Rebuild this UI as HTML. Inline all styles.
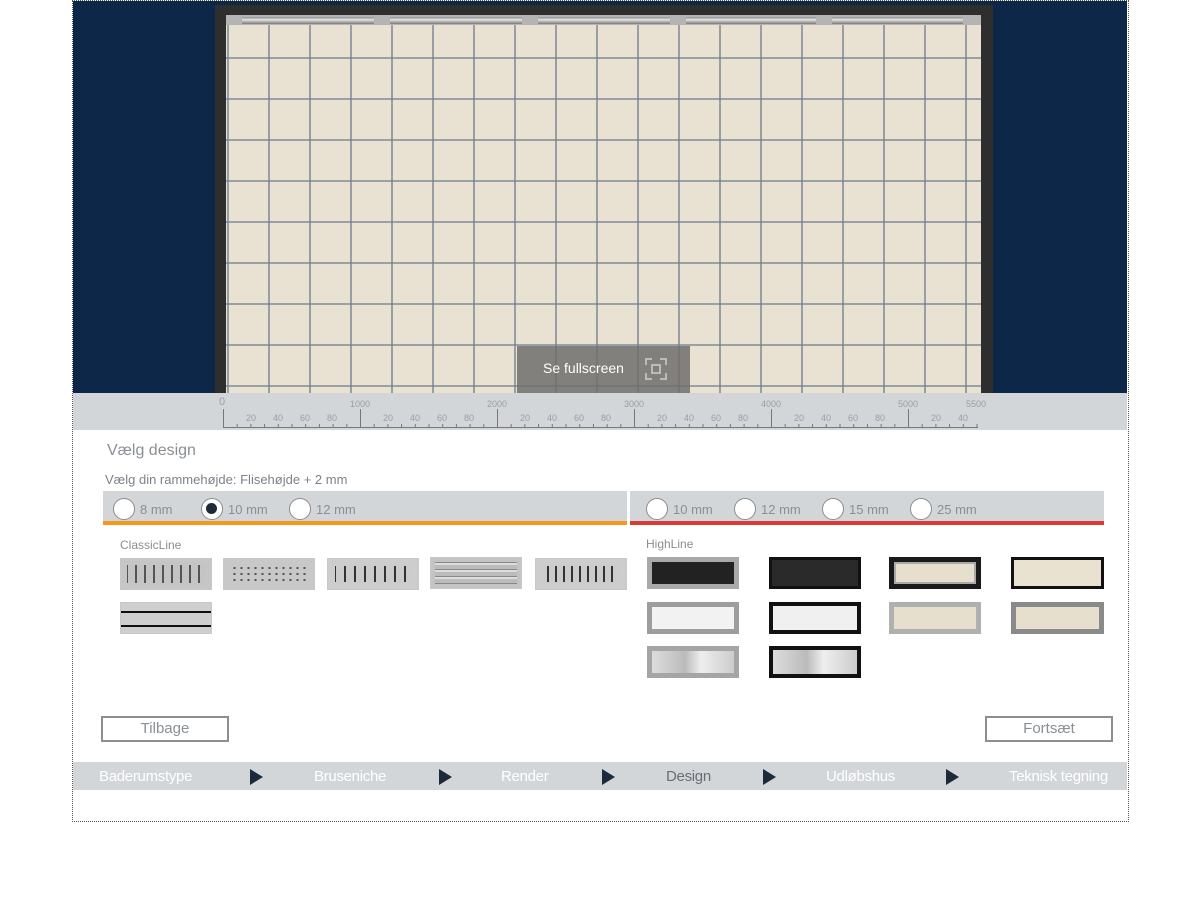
<!DOCTYPE html>
<html><head><meta charset="utf-8"><style>
*{margin:0;padding:0;box-sizing:border-box}
body{width:1200px;height:900px;background:#fff;position:relative;font-family:"Liberation Sans",sans-serif;overflow:hidden}
.a{position:absolute}
.t{color:#8a8f94}
.radio{position:absolute;width:22px;height:22px;border-radius:50%;background:#fff;border:1.5px solid #8c8c8c}
.radio.on::after{content:"";position:absolute;left:4px;top:4px;width:11px;height:11px;border-radius:50%;background:#1c2a3a}
.rl{position:absolute;font-size:13px;color:#8a8f94}
.th{position:absolute;width:92px;height:32px;background:linear-gradient(#d8d8d8,#b9b9b9 50%,#cfcfcf);border:1px solid #c8c8c8}
.nav{position:absolute;top:768px;font-size:15px;color:#fff;letter-spacing:-0.3px}
.arr{position:absolute;top:769px;width:0;height:0;border-top:8px solid transparent;border-bottom:8px solid transparent;border-left:13px solid #1c2a3a}
.btn{position:absolute;height:26px;border:2px solid #8a8f94;font-size:15px;color:#8a8f94;text-align:center;line-height:22px;background:#fff}
</style></head><body>
<div class="a" style="left:72px;top:0;width:1057px;height:822px;border:1px dotted #555"></div>
<div class="a" style="left:73px;top:1px;width:1054px;height:392px;background:#0c2747"></div>
<div class="a" style="left:215px;top:5px;width:778px;height:388px;background:#2e2e2e"></div>
<svg class="a" style="left:226px;top:15px" width="755" height="378">
<defs><pattern id="g" x="1" y="1" width="41" height="41" patternUnits="userSpaceOnUse"><path d="M1 0V41M0 1H41" stroke="#6b7a8c" stroke-width="1.3" fill="none"/></pattern>
<linearGradient id="dr" x1="0" y1="0" x2="0" y2="1"><stop offset="0" stop-color="#8e8e8e"/><stop offset=".4" stop-color="#e2e2e2"/><stop offset="1" stop-color="#777"/></linearGradient></defs>
<rect width="755" height="378" fill="#e9e2d2"/>
<rect width="755" height="378" fill="url(#g)"/>
<rect width="755" height="10" fill="#b4b4b4"/>
<rect x="16" y="2" width="132" height="7" fill="url(#dr)"/><rect x="164" y="2" width="132" height="7" fill="url(#dr)"/><rect x="312" y="2" width="132" height="7" fill="url(#dr)"/><rect x="460" y="2" width="130" height="7" fill="url(#dr)"/><rect x="606" y="2" width="131" height="7" fill="url(#dr)"/>
</svg>
<div class="a" style="left:517px;top:346px;width:173px;height:47px;background:rgba(110,110,110,.85)"></div>
<div class="a" style="left:543px;top:360px;font-size:14px;color:#fff">Se fullscreen</div>
<svg class="a" style="left:645px;top:358px" width="22" height="22"><path d="M1 7V1H7M15 1H21V7M21 15V21H15M7 21H1V15M7 7H15V15H7Z" stroke="#bbb" stroke-width="2" fill="none"/></svg>
<div class="a" style="left:73px;top:393px;width:1054px;height:37px;background:#d3d6d9"></div>
<svg class="a" style="left:200px;top:393px" width="800" height="37" font-family="Liberation Sans" font-size="9" fill="#9a9ea3">
<defs><pattern id="tk" x="23" y="0" width="13.7" height="37" patternUnits="userSpaceOnUse"><path d="M0.5 31V35" stroke="#777"/></pattern></defs>
<rect x="23" y="0" width="755" height="37" fill="url(#tk)"/>
<path d="M23 34.5H778M23.5 16V35M160.5 16V35M297.5 16V35M434.5 16V35M571.5 16V35M708.5 16V35" stroke="#777"/>
<text x="19" y="12" font-size="11">0</text><text x="150" y="14">1000</text><text x="287" y="14">2000</text><text x="424" y="14">3000</text><text x="561" y="14">4000</text><text x="698" y="14">5000</text><text x="766" y="14">5500</text>
<g id="s"><text x="46" y="28">20</text><text x="73" y="28">40</text><text x="100" y="28">60</text><text x="127" y="28">80</text></g>
<use href="#s" x="137"/><use href="#s" x="274"/><use href="#s" x="411"/><use href="#s" x="548"/>
<text x="731" y="28">20</text><text x="758" y="28">40</text>
</svg>
<div class="a t" style="left:107px;top:442px;font-size:16px">Vælg design</div>
<div class="a t" style="left:105px;top:472px;font-size:13px;color:#7d8288">Vælg din rammehøjde: Flisehøjde + 2 mm</div>
<div class="a" style="left:103px;top:491px;width:524px;height:34px;background:#d3d6d9;border-bottom:4px solid #f39a1e"></div>
<div class="a" style="left:630px;top:491px;width:474px;height:34px;background:#d3d6d9;border-bottom:4px solid #d93a3a"></div>
<div class="radio" style="left:113px;top:498px"></div><div class="rl" style="left:140px;top:502px">8 mm</div>
<div class="radio on" style="left:201px;top:498px"></div><div class="rl" style="left:228px;top:502px">10 mm</div>
<div class="radio" style="left:289px;top:498px"></div><div class="rl" style="left:316px;top:502px">12 mm</div>
<div class="radio" style="left:646px;top:498px"></div><div class="rl" style="left:673px;top:502px">10 mm</div>
<div class="radio" style="left:734px;top:498px"></div><div class="rl" style="left:761px;top:502px">12 mm</div>
<div class="radio" style="left:822px;top:498px"></div><div class="rl" style="left:849px;top:502px">15 mm</div>
<div class="radio" style="left:910px;top:498px"></div><div class="rl" style="left:937px;top:502px">25 mm</div>
<div class="a t" style="left:120px;top:538px;font-size:12px">ClassicLine</div>
<div class="a t" style="left:646px;top:537px;font-size:12px">HighLine</div>
<div class="th" style="left:120px;top:558px;background:repeating-linear-gradient(90deg,#c4c4c4 0 5px,#555 5px 7px,#c4c4c4 7px 9px),#ccc;box-shadow:inset 0 0 0 6px #c6c6c6"></div>
<div class="th" style="left:223px;top:558px;background:radial-gradient(#555 1px,transparent 1.5px) 0 0/7px 6px,#c8c8c8;box-shadow:inset 0 0 0 7px #c8c8c8"></div>
<div class="th" style="left:327px;top:558px;background:repeating-linear-gradient(90deg,#ccc 0 6px,#333 6px 8px,#ccc 8px 10px);box-shadow:inset 0 0 0 7px #cdcdcd"></div>
<div class="th" style="left:430px;top:557px;background:repeating-linear-gradient(#bbb 0 4px,#888 4px 5px,#ddd 5px 7px);box-shadow:inset 0 0 0 4px #c4c4c4"></div>
<div class="th" style="left:535px;top:558px;background:repeating-linear-gradient(90deg,#ccc 0 3px,#333 3px 5px,#ccc 5px 8px);box-shadow:inset 0 0 0 7px #cdcdcd"></div>
<div class="th" style="left:120px;top:602px;background:linear-gradient(#cfcfcf 0 8px,#111 8px 10px,#cfcfcf 10px 22px,#111 22px 24px,#cfcfcf 24px)"></div>
<div class="th" style="left:647px;top:557px;background:#222;border:5px solid #a9a9a9"></div>
<div class="th" style="left:769px;top:557px;background:#2a2a2a;border:3px solid #111"></div>
<div class="th" style="left:889px;top:557px;background:#e6dfcd;border:5px solid #1a1a1a;box-shadow:inset 0 0 0 2px #aaa"></div>
<div class="th" style="left:1011px;top:557px;width:93px;background:#e9e2d0;border:3px solid #111"></div>
<div class="th" style="left:647px;top:602px;background:#f2f2f2;border:5px solid #9d9d9d"></div>
<div class="th" style="left:769px;top:602px;background:#f0f0f0;border:4px solid #111"></div>
<div class="th" style="left:889px;top:602px;background:#e6dfcd;border:5px solid #b0b0b0"></div>
<div class="th" style="left:1011px;top:602px;width:93px;background:#e6dfcd;border:5px solid #8a8a8a"></div>
<div class="th" style="left:647px;top:646px;background:linear-gradient(90deg,#ddd,#bbb 40%,#eee 60%,#ccc);border:5px solid #a5a5a5"></div>
<div class="th" style="left:769px;top:646px;background:linear-gradient(90deg,#ddd,#bbb 40%,#eee 60%,#ccc);border:4px solid #111"></div>
<div class="btn" style="left:101px;top:716px;width:128px">Tilbage</div>
<div class="btn" style="left:985px;top:716px;width:128px">Fortsæt</div>
<div class="a" style="left:73px;top:762px;width:1054px;height:28px;background:#d3d6d9"></div>
<div class="nav" style="left:99px">Baderumstype</div>
<div class="arr" style="left:250px"></div>
<div class="nav" style="left:314px">Bruseniche</div>
<div class="arr" style="left:439px"></div>
<div class="nav" style="left:501px">Render</div>
<div class="arr" style="left:602px"></div>
<div class="nav" style="left:666px;color:#6a6f75">Design</div>
<div class="arr" style="left:763px"></div>
<div class="nav" style="left:826px">Udløbshus</div>
<div class="arr" style="left:946px"></div>
<div class="nav" style="left:1009px">Teknisk tegning</div>
</body></html>
